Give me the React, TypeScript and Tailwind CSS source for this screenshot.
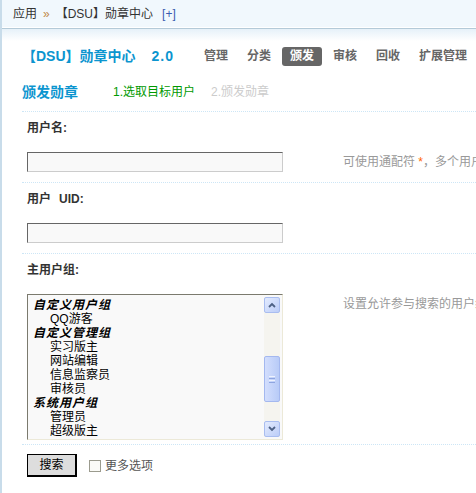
import React from "react";

function Chevron({ up }: { up?: boolean }) {
  return (
    <svg width="8" height="6" viewBox="0 0 8 6">
      <path
        d={up ? "M1 5 L4 2 L7 5" : "M1 1 L4 4 L7 1"}
        fill="none"
        stroke="#4d6185"
        strokeWidth="1.8"
      />
    </svg>
  );
}

function ScrollBtn({ up }: { up?: boolean }) {
  return (
    <div className="w-[16px] h-[16px] rounded-[2px] border border-[#a9bdf0] bg-[linear-gradient(135deg,#e3ebfe,#bccdf8)] flex items-center justify-center">
      <Chevron up={up} />
    </div>
  );
}

export default function App() {
  const groups: { label?: string; item?: string }[] = [
    { label: "自定义用户组" },
    { item: "QQ游客" },
    { label: "自定义管理组" },
    { item: "实习版主" },
    { item: "网站编辑" },
    { item: "信息监察员" },
    { item: "审核员" },
    { label: "系统用户组" },
    { item: "管理员" },
    { item: "超级版主" },
  ];
  const nav = ["管理", "分类", "颁发", "审核", "回收", "扩展管理"];

  return (
    <div className="w-[476px] h-[493px] overflow-hidden bg-white font-['Liberation_Sans','Noto_Sans_CJK_SC',sans-serif] text-[12px] text-[#333]">
      <div className="h-full border-l-2 border-[#c8dcea]">
        <div className="h-[27px] bg-[#f1f8fd] flex items-center pl-[11px] leading-[14px] whitespace-nowrap">
          <span>应用</span>
          <span className="mx-[6px] text-[#c08a4a]">»</span>
          <span>【DSU】勋章中心</span>
          <span className="ml-[9px] text-[#3a5bb0]">[+]</span>
        </div>
        <div className="h-px bg-white" />
        <div className="h-px bg-[#b4cad8]" />
        <div className="bg-[linear-gradient(to_bottom,#e6f1f9,#ffffff_12px)] pl-[20px] pt-[18px]">
          <div className="flex items-center h-[19px] whitespace-nowrap">
            <div className="w-[174px] text-[14px] font-bold text-[#0c95cf] leading-[19px]">
              【DSU】勋章中心<span className="ml-[16px] tracking-[1px]">2.0</span>
            </div>
            <div className="flex gap-[3px]">
              {nav.map((n) => (
                <div
                  key={n}
                  className={
                    n === "颁发"
                      ? "px-[8px] h-[19px] leading-[19px] font-bold rounded-[3px] bg-[#666] text-white"
                      : "px-[8px] h-[19px] leading-[19px] font-bold text-[#666]"
                  }
                >
                  {n}
                </div>
              ))}
            </div>
          </div>
          <div className="flex items-center h-[20px] mt-[16px] whitespace-nowrap">
            <div className="w-[91px] text-[14px] font-bold text-[#0c95cf]">颁发勋章</div>
            <div className="w-[98px] text-[#009900]">1.选取目标用户</div>
            <div className="text-[#cccccc]">2.颁发勋章</div>
          </div>

          <div className="mt-[9px]">
            <div className="border-t border-dotted border-[#cde6f6] pl-[5px]">
              <div className="h-[32px] flex items-center font-bold leading-[14px]">用户名:</div>
              <div className="flex items-center mt-[8px] pb-[10px]">
                <div className="w-[316px] shrink-0">
                  <div className="w-[256px] h-[20px] border border-[#666] border-r-[#ccc] border-b-[#ccc] bg-[#f9f9f9]" />
                </div>
                <div className="whitespace-nowrap text-[#999] leading-[14px]">
                  可使用通配符 <span className="text-[#f60]">*</span>，多个用户名用半角逗号 "," 隔开
                </div>
              </div>
            </div>

            <div className="border-t border-dotted border-[#cde6f6] pl-[5px]">
              <div className="h-[32px] flex items-center font-bold leading-[14px]">
                用户<span className="ml-[8px]">UID:</span>
              </div>
              <div className="flex items-center mt-[8px] pb-[10px]">
                <div className="w-[256px] h-[20px] border border-[#666] border-r-[#ccc] border-b-[#ccc] bg-[#f9f9f9]" />
              </div>
            </div>

            <div className="border-t border-dotted border-[#cde6f6] pl-[5px]">
              <div className="h-[32px] flex items-center font-bold leading-[14px]">主用户组:</div>
              <div className="flex items-start mt-[8px] pb-[4px]">
                <div className="w-[316px] shrink-0">
                  <div className="w-[256px] h-[146px] border border-[#7b7a6e] border-r-[#ece9d8] border-b-[#ece9d8] bg-[#f9f9f9] flex p-[2px]">
                    <div className="flex-1 overflow-hidden pt-[1px] pl-[3px] text-black">
                      {groups.map((g, i) =>
                        g.label ? (
                          <div key={i} className="h-[14px] leading-[14px] font-bold italic tracking-[1px] whitespace-nowrap">
                            {g.label}
                          </div>
                        ) : (
                          <div key={i} className="h-[14px] leading-[14px] pl-[17px] whitespace-nowrap">
                            {g.item}
                          </div>
                        )
                      )}
                    </div>
                    <div className="w-[16px] h-[140px] flex flex-col bg-[#f5f4ef]">
                      <ScrollBtn up />
                      <div className="flex-1 relative">
                        <div className="absolute left-0 top-[43px] w-[16px] h-[46px] rounded-[2px] border border-[#a4b8ef] bg-[linear-gradient(90deg,#d3defd,#b8cbf7)] flex flex-col items-center justify-center gap-[1px]">
                          <div className="w-[6px] h-px bg-[#eef2fd]" />
                          <div className="w-[6px] h-px bg-[#8ea5e0]" />
                          <div className="w-[6px] h-px bg-[#eef2fd]" />
                          <div className="w-[6px] h-px bg-[#8ea5e0]" />
                        </div>
                      </div>
                      <ScrollBtn />
                    </div>
                  </div>
                </div>
                <div className="whitespace-nowrap text-[#999] leading-[14px] pt-[3px]">
                  设置允许参与搜索的用户组，可以按住 CTRL 多选
                </div>
              </div>
            </div>

            <div className="border-t border-dotted border-[#cde6f6] pl-[5px] pt-[9px] flex items-center">
              <div className="w-[50px] h-[23px] bg-[#dddddd] border-t border-l border-r-2 border-b-2 border-black flex items-center justify-center text-black leading-[14px]">
                搜索
              </div>
              <div className="ml-[12px] w-[12px] h-[12px] border border-[#9b9b8e] bg-[#fbfbf7]" />
              <div className="ml-[4px] text-[#555] leading-[14px]">更多选项</div>
            </div>
          </div>
        </div>
      </div>
    </div>
  );
}
